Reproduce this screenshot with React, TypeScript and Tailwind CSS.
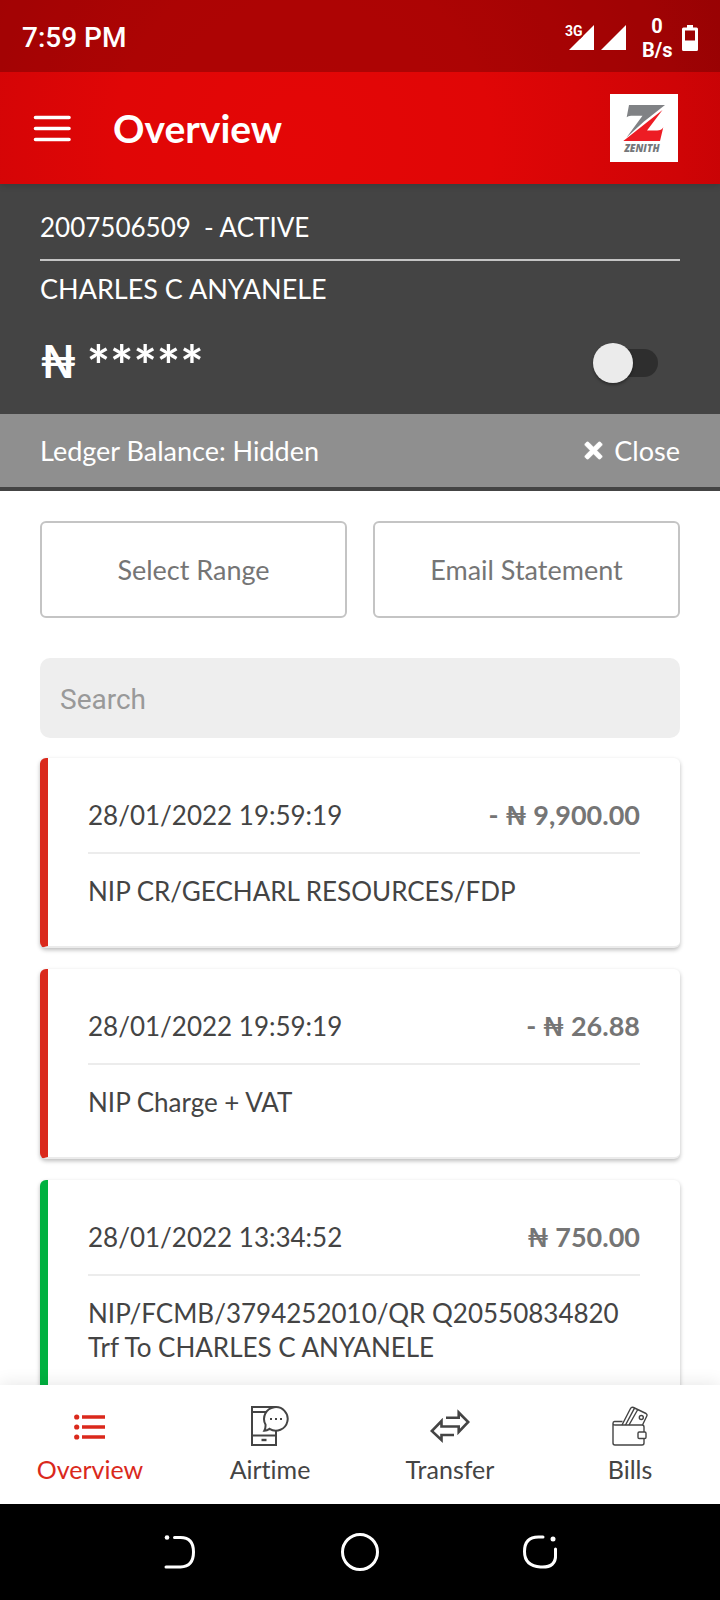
import type { ReactNode } from "react";
import { FaTimes } from "react-icons/fa";

type Transaction = {
  id: number;
  date: string;
  sign: string;
  amount: string;
  description: string;
  credit: boolean;
};

const transactions: Transaction[] = [
  { id: 1, date: "28/01/2022 19:59:19", sign: "- ", amount: "9,900.00", description: "NIP CR/GECHARL RESOURCES/FDP", credit: false },
  { id: 2, date: "28/01/2022 19:59:19", sign: "- ", amount: "26.88", description: "NIP Charge + VAT", credit: false },
  { id: 3, date: "28/01/2022 13:34:52", sign: "", amount: "750.00", description: "NIP/FCMB/3794252010/QR Q20550834820 Trf To CHARLES C ANYANELE", credit: true },
];

function StatusBar() {
  return (
    <div className="flex h-[72px] items-center justify-between bg-black/23 pt-[3px] pr-[22px] pl-[22px] font-[Roboto,sans-serif] text-white">
      <span className="text-[28px] leading-8 font-medium">7:59 PM</span>
      <div className="flex items-center">
        <svg className="h-7 w-[62px]" viewBox="0 0 62 28" fill="currentColor" aria-hidden="true">
          <path d="M30 1v25H5z" />
          <path d="M62 1v25H37z" />
          <path d="M0 0h18.500v12.500L16 15H0z" fill="#a60303" />
          <text x="1" y="12" fontSize="14" fontWeight="700" fontFamily="Roboto, sans-serif">3G</text>
        </svg>
        <div className="ml-4 w-[30px] text-center text-[20px] leading-6 font-bold">
          <div>0</div>
          <div>B/s</div>
        </div>
        <svg className="ml-[10px] h-[26px] w-4" viewBox="0 0 16 26" aria-hidden="true">
          <path fill="white" fillRule="evenodd" d="M5 0h6v2.500h3.500q1.500 0 1.500 1.500v20.500q0 1.500-1.500 1.500h-13q-1.500 0-1.500-1.500v-20.500q0-1.500 1.500-1.500H5zM3 5.500v10h10v-10z" />
        </svg>
      </div>
    </div>
  );
}

function ZenithLogo() {
  return (
    <div className="flex size-[68px] flex-col items-center bg-white pt-[10px]">
      <svg className="h-[38px] w-[44px]" viewBox="13 10 44 38" aria-hidden="true">
        <path fill="#808285" d="M20 11H56L35 27.500 17.500 43.500 33.500 21.700H22q-3 0-4.300 1.600z" />
        <path fill="#ed1c24" d="M53.500 16 38 36.500h10q4.500 0 6.300-3.200L51 47H14.300z" />
      </svg>
      <span className="pr-1 font-['Open_Sans',sans-serif] text-[10px] leading-3 font-extrabold text-[#75777a] italic">ZENITH</span>
    </div>
  );
}

function Header() {
  return (
    <header className="relative z-10 bg-[radial-gradient(ellipse_75%_300%_at_42%_80%,#e40606_0%,#e00606_35%,#cf0406_70%,#ba0104_100%)] shadow-[0_2px_6px_rgba(0,0,0,0.15)]">
      <StatusBar />
      <div className="flex h-28 items-center pr-[42px] pl-[33px]">
        <button type="button" aria-label="Open menu" className="text-white">
          <svg className="h-7 w-[38px]" viewBox="0 0 38 28" stroke="currentColor" strokeWidth="3.600" strokeLinecap="round" aria-hidden="true">
            <path d="M2.500 3.500h33.500M2.500 14.500h33.500M2.500 25.500h33.500" />
          </svg>
        </button>
        <h1 className="ml-[42px] flex-1 text-[39px] leading-[48px] font-bold text-white">Overview</h1>
        <ZenithLogo />
      </div>
    </header>
  );
}

function AccountPanel() {
  return (
    <section className="shrink-0 border-b-4 border-[#444] bg-[#444] text-white">
      <div className="px-10 pt-[26px] pb-[31px]">
        <p className="border-b-2 border-[#c4c4c4] pb-[15px] text-[26px] leading-[34px] whitespace-pre">2007506509  - ACTIVE</p>
        <p className="mt-[11px] text-[27px] leading-[34px]">CHARLES C ANYANELE</p>
        <div className="mt-[37px] flex h-10 items-center justify-between pr-[22px]">
          <div className="flex items-start gap-[10px] leading-10 font-bold">
            <span className="text-[46px]">₦</span>
            <span className="pt-1 text-[55px]">*****</span>
          </div>
          <input
            type="checkbox"
            role="switch"
            aria-label="Show balance"
            className="relative h-7 w-[58px] appearance-none rounded-full bg-[#2e2e2e] before:absolute before:-top-[6px] before:-left-[7px] before:size-10 before:rounded-full before:bg-[#ebebeb] before:shadow-[0_2px_3px_rgba(0,0,0,0.35)] checked:before:left-[25px]"
          />
        </div>
      </div>
      <div className="flex h-[73px] items-center justify-between bg-[#8f8f8f] px-10 text-[27px] leading-[34px]">
        <span>Ledger Balance: Hidden</span>
        <button type="button" className="flex items-center gap-2">
          <FaTimes className="size-[25px]" stroke="currentColor" strokeWidth="16" aria-hidden="true" />
          Close
        </button>
      </div>
    </section>
  );
}

function TransactionCard({ item }: { item: Transaction }) {
  return (
    <li
      className={`rounded-[6px] border-b-2 border-l-8 border-b-[#ebebeb] bg-white px-10 pt-10 pb-[38px] text-[26px] leading-[34px] text-[#444] shadow-[0_2px_4px_rgba(0,0,0,0.27)] ${
        item.credit ? "border-l-[#00b140]" : "border-l-[#da291c]"
      }`}
    >
      <div className="flex items-center justify-between border-b-2 border-[#ececec] pb-5">
        <span>{item.date}</span>
        <span className="text-[27px] font-bold text-[#757575]">{item.sign}₦ {item.amount}</span>
      </div>
      <p className="mt-5">{item.description}</p>
    </li>
  );
}

function OverviewIcon() {
  return (
    <svg className="size-10" viewBox="0 0 40 40" fill="none" stroke="currentColor" strokeWidth="3.600" aria-hidden="true">
      <path d="M12 11h23M12 21h23M12 31h23" />
      <g fill="currentColor" stroke="none">
        <circle cx="6.700" cy="11" r="2.600" />
        <circle cx="6.700" cy="21" r="2.600" />
        <circle cx="6.700" cy="31" r="2.600" />
      </g>
    </svg>
  );
}

function AirtimeIcon() {
  return (
    <svg className="size-10" viewBox="0 0 40 40" fill="none" stroke="currentColor" strokeWidth="2" aria-hidden="true">
      <path d="M26 1H2v38h24V25M2 6h15M2 29.500h24" />
      <path d="M11.500 34h5" strokeWidth="2.400" />
      <path fill="white" d="M15.500 18.500A11.800 11.800 0 1 1 19.500 22.800Q17 24.500 14.300 24.700 15.800 22 15.500 18.500z" />
      <path d="M20 13h2M25 13h2M30 13h2" strokeWidth="2.200" />
    </svg>
  );
}

function TransferIcon() {
  return (
    <svg className="size-10" viewBox="0 0 40 40" fill="none" stroke="currentColor" strokeWidth="2.600" aria-hidden="true">
      <path d="M16 11.800h12.700V6.500L38.200 16 28.700 26V20.500H11.500V15L1.800 25 11.500 34V29H24" />
    </svg>
  );
}

function BillsIcon() {
  return (
    <svg className="size-10" viewBox="0 0 40 40" fill="none" stroke="currentColor" strokeWidth="1.400" strokeLinejoin="round" aria-hidden="true">
      <path d="M12.500 15.500H4.500q-1.500 0-1.500 1.800V37q0 2 2 2h27q2 0 2-2v-4.500M34 26v-5q0-2-2-2H5q-2 0-2-1.800" />
      <rect x="28" y="26" width="8" height="6.500" rx="1.200" />
      <path d="M12 19 20.500 2.500q1-1.800 3-1L36 7.500q1.500 1 .8 2.500L32.500 19M15.500 19 24.500 2.200M19 19 27.500 4" />
      <circle cx="31.300" cy="11.500" r="2" />
    </svg>
  );
}

function NavItem({ label, active = false, icon }: { label: string; active?: boolean; icon: ReactNode }) {
  return (
    <a href="#" aria-current={active ? "page" : undefined} className={`flex flex-col items-center pt-[21px] pb-5 ${active ? "text-[#da291c]" : "text-[#444]"}`}>
      {icon}
      <span className="mt-2 text-[25px] leading-[30px] [font-variant-ligatures:none]">{label}</span>
    </a>
  );
}

function SystemBar() {
  return (
    <div className="grid h-24 grid-cols-[1fr_auto_1fr] items-center gap-[136px] bg-black text-white">
      <button type="button" aria-label="Back" className="justify-self-end">
        <svg className="h-10 w-[46px]" viewBox="0 0 46 40" fill="none" stroke="currentColor" strokeWidth="3" strokeLinecap="round" aria-hidden="true">
          <path d="M16.500 5.500h6q13 0 13 14.500t-13 15H8" />
          <circle cx="9" cy="5.500" r="2.300" fill="currentColor" stroke="none" />
        </svg>
      </button>
      <button type="button" aria-label="Home">
        <svg className="size-10" viewBox="0 0 40 40" fill="none" stroke="currentColor" strokeWidth="3" aria-hidden="true">
          <circle cx="20" cy="20" r="17.500" />
        </svg>
      </button>
      <button type="button" aria-label="Recent apps" className="justify-self-start">
        <svg className="h-10 w-[46px]" viewBox="0 0 46 40" fill="none" stroke="currentColor" strokeWidth="3" strokeLinecap="round" aria-hidden="true">
          <path d="M27 5h-4.500Q8.500 5 8.500 19.500T24.500 35 39.500 22v-5" />
          <circle cx="37" cy="7" r="2.500" fill="currentColor" stroke="none" />
        </svg>
      </button>
    </div>
  );
}

export default function App() {
  return (
    <div className="flex h-screen flex-col bg-white font-[Lato,sans-serif]">
      <Header />
      <AccountPanel />
      <main className="min-h-0 flex-1 overflow-y-auto px-10 pt-[30px] [scrollbar-width:none]">
        <div className="grid grid-cols-2 gap-[26px] text-[27px] leading-[34px] text-[#757575]">
          <button type="button" className="h-[97px] rounded-[6px] border-2 border-[#c4c4c4]">Select Range</button>
          <button type="button" className="h-[97px] rounded-[6px] border-2 border-[#c4c4c4]">Email Statement</button>
        </div>
        <input
          type="search"
          aria-label="Search transactions"
          placeholder="Search"
          className="mt-10 block h-20 w-full appearance-none rounded-[10px] bg-[#eee] px-5 pt-[2px] font-[Roboto,sans-serif] text-[28px] text-[#444] placeholder:text-[#999]"
        />
        <ul className="mt-5 flex flex-col gap-[21px] pb-5">
          {transactions.map((item) => (
            <TransactionCard key={item.id} item={item} />
          ))}
        </ul>
      </main>
      <nav aria-label="Main" className="relative grid shrink-0 grid-cols-4 bg-white shadow-[0_-2px_16px_rgba(0,0,0,0.09)]">
        <NavItem label="Overview" active icon={<OverviewIcon />} />
        <NavItem label="Airtime" icon={<AirtimeIcon />} />
        <NavItem label="Transfer" icon={<TransferIcon />} />
        <NavItem label="Bills" icon={<BillsIcon />} />
      </nav>
      <SystemBar />
    </div>
  );
}
